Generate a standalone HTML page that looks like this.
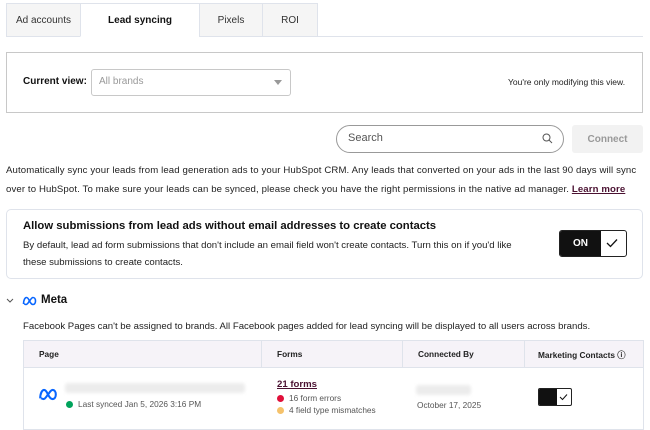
<!DOCTYPE html>
<html><head><meta charset="utf-8"><style>
*{box-sizing:border-box;margin:0;padding:0}
body{width:650px;height:426px;overflow:hidden;background:#fff;font-family:"Liberation Sans",sans-serif;color:#33475b;position:relative;font-size:10px}
.a{position:absolute}
.tab{position:absolute;top:3px;height:34px;border:1px solid #dfe3eb;background:#f5f5f5;font-size:10px;display:flex;align-items:center;justify-content:center;color:#333}
.dot{position:absolute;width:7px;height:7px;border-radius:50%}
</style></head><body>
<div class="a" style="left:6px;top:36px;width:637px;height:1px;background:#dfe3eb"></div>
<div class="tab" style="left:6px;width:75px">Ad accounts</div>
<div class="tab" style="left:80px;width:120px;background:#fff;border-bottom-color:#fff;font-weight:bold;color:#111">Lead syncing</div>
<div class="tab" style="left:199px;width:64px">Pixels</div>
<div class="tab" style="left:262px;width:56px">ROI</div>

<div class="a" style="left:6px;top:52px;width:637px;height:61px;border:1px solid #c8c8c8"></div>
<div class="a" style="left:23px;top:76px;font-weight:bold;color:#111;font-size:10px">Current view:</div>
<div class="a" style="left:91px;top:69px;width:200px;height:27px;border:1px solid #c8c8c8;border-radius:3px;background:#fff"></div>
<div class="a" style="left:99px;top:76px;color:#999;font-size:10px">All brands</div>
<div class="a" style="left:274px;top:80px;width:0;height:0;border-left:4px solid transparent;border-right:4px solid transparent;border-top:5px solid #999"></div>
<div class="a" style="left:508px;top:77px;font-size:8.5px;color:#222">You're only modifying this view.</div>

<div class="a" style="left:336px;top:125px;width:228px;height:28px;border:1px solid #999;border-radius:14px"></div>
<div class="a" style="left:348px;top:132px;font-size:11px;color:#555">Search</div>
<svg class="a" style="left:542px;top:133px" width="11" height="11" viewBox="0 0 11 11"><circle cx="4.5" cy="4.5" r="3.5" fill="none" stroke="#555" stroke-width="1"/><path d="M7 7l3 3" stroke="#555" stroke-width="1"/></svg>
<div class="a" style="left:572px;top:125px;width:71px;height:28px;background:#f2f2f2;border-radius:3px;font-weight:bold;color:#999;font-size:10px;display:flex;align-items:center;justify-content:center">Connect</div>

<div class="a" style="left:6px;top:161px;width:644px;font-size:9.6px;letter-spacing:0.12px;line-height:19px;color:#222">Automatically sync your leads from lead generation ads to your HubSpot CRM. Any leads that converted on your ads in the last 90 days will sync over to HubSpot. To make sure your leads can be synced, please check you have the right permissions in the native ad manager. <b style="color:#4a1131;text-decoration:underline">Learn more</b></div>

<div class="a" style="left:6px;top:209px;width:637px;height:70px;border:1px solid #dfe3eb;border-radius:5px"></div>
<div class="a" style="left:23px;top:220px;font-weight:bold;font-size:11.3px;color:#111">Allow submissions from lead ads without email addresses to create contacts</div>
<div class="a" style="left:23px;top:237px;width:500px;font-size:9.6px;line-height:17px;color:#222">By default, lead ad form submissions that don't include an email field won't create contacts. Turn this on if you'd like these submissions to create contacts.</div>
<div class="a" style="left:559px;top:230px;width:68px;height:27px;border:1px solid #222;border-radius:3px;background:#fff;overflow:hidden"><div style="width:41px;height:100%;background:#111;color:#fff;font-weight:bold;font-size:10px;display:flex;align-items:center;justify-content:center">ON</div></div>
<svg class="a" style="left:606px;top:238px" width="12" height="10" viewBox="0 0 12 10"><path d="M1 5l3.5 3.5L11 1.5" fill="none" stroke="#111" stroke-width="1.3"/></svg>

<svg class="a" style="left:6px;top:298px" width="8" height="6" viewBox="0 0 8 6"><path d="M1 1l3 3 3-3" fill="none" stroke="#555" stroke-width="1"/></svg>
<svg class="a" style="left:22px;top:296px" width="15" height="10" viewBox="0 0 15 10"><path d="M1.5 8C1.5 4 3 1.5 4.5 1.5S7 4 7.5 5s2 3.5 3.5 3.5S13.5 7 13.5 5 12.5 1.5 11 1.5 8.5 4 7.5 5 5.5 8.5 4 8.5 1.5 7 1.5 8z" fill="none" stroke="#0866ff" stroke-width="1.6"/></svg>
<div class="a" style="left:41px;top:294px;font-weight:bold;font-size:11.5px;color:#111">Meta</div>
<div class="a" style="left:23px;top:321px;font-size:9.6px;color:#222">Facebook Pages can't be assigned to brands. All Facebook pages added for lead syncing will be displayed to all users across brands.</div>

<div class="a" style="left:23px;top:340px;width:621px;height:90px;border:1px solid #dfe3eb"></div>
<div class="a" style="left:24px;top:341px;width:619px;height:27px;background:#f6f3f8;border-bottom:1px solid #dfe3eb"></div>
<div class="a" style="left:261px;top:341px;width:1px;height:27px;background:#dfe3eb"></div>
<div class="a" style="left:402px;top:341px;width:1px;height:27px;background:#dfe3eb"></div>
<div class="a" style="left:524px;top:341px;width:1px;height:27px;background:#dfe3eb"></div>
<div class="a" style="left:39px;top:349px;font-weight:bold;font-size:8.3px;color:#222">Page</div>
<div class="a" style="left:277px;top:349px;font-weight:bold;font-size:8.3px;color:#222">Forms</div>
<div class="a" style="left:418px;top:349px;font-weight:bold;font-size:8.3px;color:#222">Connected By</div>
<div class="a" style="left:538px;top:349px;font-weight:bold;font-size:8.3px;color:#222">Marketing Contacts ⓘ</div>

<svg class="a" style="left:38px;top:388px" width="20" height="13" viewBox="0 0 15 10"><path d="M1.5 8C1.5 4 3 1.5 4.5 1.5S7 4 7.5 5s2 3.5 3.5 3.5S13.5 7 13.5 5 12.5 1.5 11 1.5 8.5 4 7.5 5 5.5 8.5 4 8.5 1.5 7 1.5 8z" fill="none" stroke="#0866ff" stroke-width="1.6"/></svg>
<div class="a" style="left:65px;top:383px;width:180px;height:10px;background:#ececec;border-radius:3px;filter:blur(1.5px)"></div>
<div class="dot" style="left:66px;top:401px;background:#00a35c"></div>
<div class="a" style="left:78px;top:399px;font-size:8.3px;color:#555">Last synced Jan 5, 2026 3:16 PM</div>
<div class="a" style="left:277px;top:379px;font-weight:bold;font-size:9.6px;color:#4a1131;text-decoration:underline">21 forms</div>
<div class="dot" style="left:277px;top:395px;background:#e0103a"></div>
<div class="a" style="left:289px;top:393px;font-size:8.3px;color:#555">16 form errors</div>
<div class="dot" style="left:277px;top:407px;background:#f5c26b"></div>
<div class="a" style="left:289px;top:405px;font-size:8.3px;color:#555">4 field type mismatches</div>
<div class="a" style="left:416px;top:385px;width:55px;height:10px;background:#ececec;border-radius:3px;filter:blur(1.5px)"></div>
<div class="a" style="left:417px;top:400px;font-size:8.3px;color:#555">October 17, 2025</div>
<div class="a" style="left:538px;top:388px;width:34px;height:18px;border:1px solid #222;border-radius:2px;background:#fff;overflow:hidden"><div style="width:18px;height:100%;background:#111"></div></div>
<svg class="a" style="left:559px;top:393px" width="9" height="8" viewBox="0 0 9 8"><path d="M1 4l2.5 2.5L8 1.5" fill="none" stroke="#111" stroke-width="1"/></svg>
</body></html>
